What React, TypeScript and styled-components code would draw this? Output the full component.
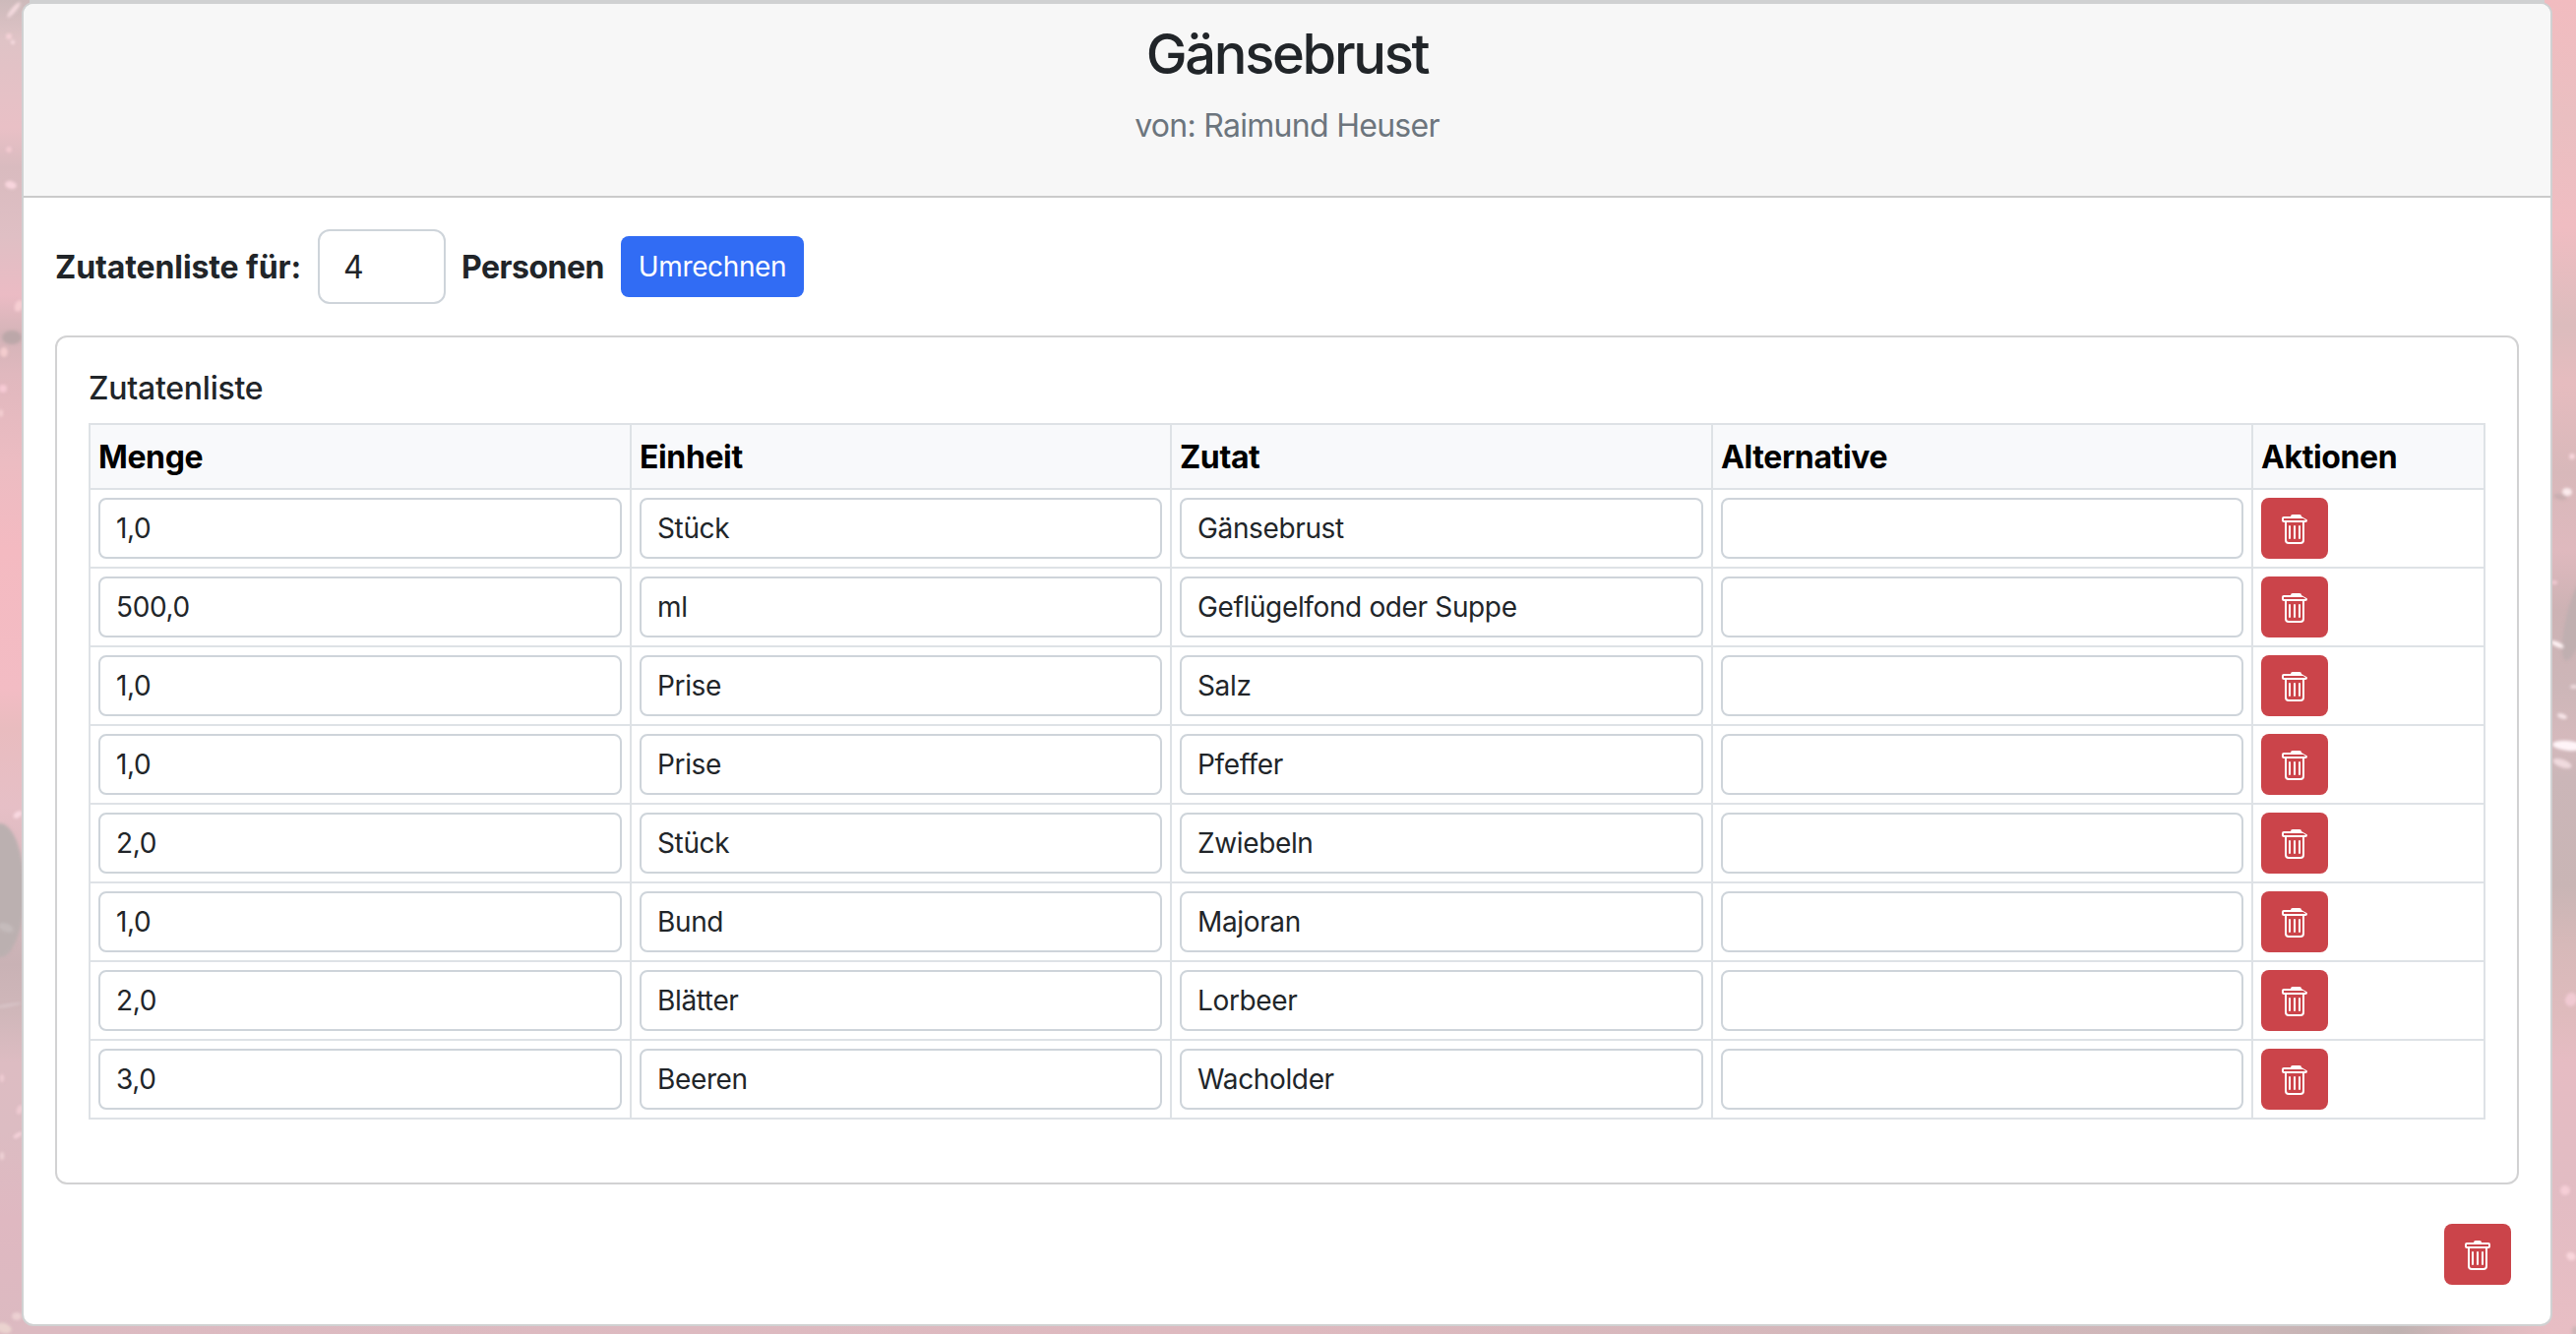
import React from "react";
import styled, { createGlobalStyle } from "styled-components";

const GlobalStyle = createGlobalStyle`
  *, *::before, *::after { box-sizing: border-box; }
  body {
    margin: 0;
    background: #e3bcc2;
    color: #212529;
    font-family: Inter, "Liberation Sans", sans-serif;
    font-size: 32px;
    line-height: 48px;
  }
`;

const Page = styled.div`
  position: relative;
  height: 1356px;
  padding: 2px 24px 8px 22px;
  overflow: hidden;
`;

const Backdrop = styled.svg`
  position: absolute;
  inset: 0;
  width: 100%;
  height: 100%;
`;

const Card = styled.main`
  position: relative;
  display: flex;
  flex-direction: column;
  height: 1346px;
  border: 2px solid #d0d1d2;
  border-radius: 12px;
  background: #fff;
`;

const CardHeader = styled.header`
  height: 197px;
  padding: 18px 32px 0;
  border-bottom: 2px solid #cacaca;
  border-radius: 10px 10px 0 0;
  background: #f7f7f7;
  text-align: center;
`;

const Title = styled.h3`
  margin: 0 0 20px;
  font-size: 56px;
  line-height: 67px;
  font-weight: 500;
  letter-spacing: -2.3px;
`;

const Author = styled.h6`
  margin: 0;
  color: #6c757d;
  font-size: 32px;
  line-height: 38px;
  font-weight: 400;
  letter-spacing: -0.72px;
`;

const CardBody = styled.div`
  padding: 32px;
`;

const Portions = styled.form`
  display: flex;
  align-items: center;
  gap: 16px;
  height: 76px;
`;

const Strong = styled.label<{ $width: number; $spacing: number }>`
  width: ${(p) => p.$width}px;
  padding-top: 1px;
  font-weight: 700;
  letter-spacing: ${(p) => p.$spacing}px;
  white-space: nowrap;
`;

const Input = styled.input<{ $large?: boolean }>`
  display: block;
  width: ${(p) => (p.$large ? "130px" : "100%")};
  height: ${(p) => (p.$large ? 76 : 62)}px;
  padding: ${(p) => (p.$large ? "12px 24px" : "8px 16px")};
  border: 2px solid #ced4da;
  border-radius: ${(p) => (p.$large ? 12 : 8)}px;
  outline: 0;
  background: #fff;
  color: #212529;
  font: inherit;
  font-size: ${(p) => (p.$large ? 32 : 28)}px;
  line-height: 42px;
  letter-spacing: -0.36px;
`;

const Button = styled.button<{ $danger?: boolean }>`
  display: flex;
  align-items: center;
  justify-content: center;
  width: ${(p) => (p.$danger ? 68 : 186)}px;
  height: 62px;
  padding: 0;
  border: 0;
  border-radius: 8px;
  background: ${(p) => (p.$danger ? "#cb444a" : "#316cf4")};
  color: #fff;
  font: inherit;
  font-size: 28px;
  line-height: 42px;
  letter-spacing: -0.38px;

  svg {
    display: block;
    width: 32px;
    height: 32px;
    margin-top: 4px;
  }
`;

const ListCard = styled.section`
  height: 863px;
  margin-top: 32px;
  padding: 32px;
  border: 2px solid #d2d2d3;
  border-radius: 12px;
`;

const ListTitle = styled.h6`
  margin: 0 0 16px;
  font-size: 32px;
  line-height: 39px;
  font-weight: 500;
  letter-spacing: -0.25px;
`;

const Table = styled.table`
  width: 2436px;
  table-layout: fixed;
  border-collapse: separate;
  border-spacing: 0;
  border-top: 2px solid #dee2e6;
  border-left: 2px solid #dee2e6;
`;

const Th = styled.th`
  height: 66px;
  padding: 2px 8px 0;
  border-right: 2px solid #dee2e6;
  border-bottom: 2px solid #dee2e6;
  background: #f8f9fb;
  color: #000;
  font-weight: 700;
  letter-spacing: -0.38px;
  text-align: left;
`;

const Td = styled.td`
  height: 80px;
  padding: 8px;
  border-right: 2px solid #dee2e6;
  border-bottom: 2px solid #dee2e6;
`;

const Footer = styled.footer`
  display: flex;
  justify-content: flex-end;
  padding: 40px 8px 0 0;
`;

const BARS =
  "M5.5 5.5A.5.5 0 0 1 6 6v6a.5.5 0 0 1-1 0V6a.5.5 0 0 1 .5-.5zm2.5 0a.5.5 0 0 1 .5.5v6a.5.5 0 0 1-1 0V6a.5.5 0 0 1 .5-.5zm3 .5a.5.5 0 0 0-1 0v6a.5.5 0 0 0 1 0V6z";
const BIN =
  "M14.5 3a1 1 0 0 1-1 1H13v9a2 2 0 0 1-2 2H5a2 2 0 0 1-2-2V4h-.5a1 1 0 0 1-1-1V2a1 1 0 0 1 1-1H6a1 1 0 0 1 1-1h2a1 1 0 0 1 1 1h3.5a1 1 0 0 1 1 1v1zM4.118 4 4 4.059V13a1 1 0 0 0 1 1h6a1 1 0 0 0 1-1V4.059L11.882 4H4.118zM2.5 3V2h11v1h-11z";
const BIN_SLANTED =
  "M14.5 3a1 1 0 0 1-1 1H13v9a2 2 0 0 1-2 2H5a2 2 0 0 1-2-2V4h-.5a1 1 0 0 1-1-1V2a1 1 0 0 1 1-1H6a1 1 0 0 1 1-1h3.5a1 1 0 0 1 1 1L13.6 2.3a1 1 0 0 1 .9.7zM4.118 4 4 4.059V13a1 1 0 0 0 1 1h6a1 1 0 0 0 1-1V4.059L11.882 4H4.118zM2.5 3V2h9.9l1.3 1h-11.2z";

const Trash = ({ slanted }: { slanted?: boolean }) => (
  <svg viewBox="0 0 16 16" fill="currentColor">
    <path d={BARS} />
    <path fillRule="evenodd" d={slanted ? BIN_SLANTED : BIN} />
  </svg>
);

type Stop = [number, string];
const LEFT: Stop[] = [
  [0, "#cdbabb"], [40, "#dfc3c6"], [130, "#e9c0c6"], [170, "#d9bbbf"], [240, "#dfbfc4"],
  [300, "#ebbbc4"], [340, "#d4b4b8"], [380, "#e0b8be"], [470, "#ecbcc2"], [560, "#f4bac1"],
  [700, "#f3bcc4"], [740, "#e9bcbf"], [820, "#e6bfc6"], [980, "#c9b2b5"], [1030, "#d0b7ba"],
  [1080, "#ddbcc2"], [1150, "#dcbcc2"], [1240, "#dfb8c1"], [1356, "#dcbac1"],
];
const RIGHT: Stop[] = [
  [0, "#f2bcc0"], [120, "#eabfc1"], [230, "#f0bdc2"], [330, "#dcbcbd"], [390, "#e6bcbf"],
  [480, "#d8b8ba"], [560, "#dfb9be"], [620, "#cdb2b4"], [700, "#cdb6b8"], [750, "#d5b9bc"],
  [790, "#cbb6b8"], [900, "#c9b5b5"], [960, "#d7b9b9"], [1030, "#dfbbbd"], [1080, "#e6bcc3"],
  [1200, "#e2bcc3"], [1356, "#e8bec4"],
];

// x, y, rx, ry, rotation, colour
const SPECKS: [number, number, number, number, number, string][] = [
  [14, 10, 10, 2.5, -50, "#f3d9dd"], [9, 37, 3, 3, 0, "#f6d2d8"], [13, 43, 2, 2, 0, "#fbe0e5"],
  [9, 152, 3, 3, 0, "#f3cad1"], [11, 188, 6, 4, 15, "#f8d5dd"], [19, 311, 4, 6, 20, "#f6cdd2"],
  [12, 343, 10, 7, 0, "#bca7a9"], [4, 358, 4, 5, 0, "#f3ccce"], [3, 395, 4, 4, 0, "#f6cad4"],
  [1, 420, 2, 4, 0, "#f4cfd2"], [18, 828, 5, 3, -35, "#f9d9e1"], [0, 905, 25, 68, 0, "#bbb0b0"],
  [6, 943, 8, 4, 20, "#c5bbbb"], [8, 1022, 14, 1.5, -10, "#d8c5c8"], [2, 1096, 2, 4, 0, "#efccd3"],
  [20, 1128, 3, 5, 20, "#efcbd2"], [18, 1154, 5, 2, -35, "#f5d2da"], [2, 1175, 2, 4, 0, "#efd3d6"],
  [4, 1350, 8, 5, 20, "#ead3cf"], [17, 1338, 5, 4, 0, "#ecd0d2"],
  [2614, 464, 3, 3, 0, "#f8d6dc"], [2602, 505, 7, 3, 10, "#c9aeb0"], [2609, 500, 5, 4, 10, "#fbeaec"],
  [2596, 592, 3, 2, 0, "#f2cbd3"], [2620, 625, 11, 48, 15, "#c0afb0"],
  [2599, 655, 7, 2.5, 25, "#fff3f4"], [2616, 698, 4, 2, 0, "#eedadd"], [2604, 728, 5, 2.5, 20, "#f8e6e9"],
  [2610, 758, 16, 5, 5, "#fff4f8"], [2604, 776, 10, 4, 20, "#f0dade"],
  [2613, 1016, 6, 7, 20, "#f0c9d2"], [2607, 1210, 5, 5, 0, "#f5ced6"],
  [2613, 1277, 5, 4, 25, "#f9d5db"], [2617, 1353, 3, 5, 0, "#ccb5b6"],
];

const Stops = ({ items }: { items: Stop[] }) => (
  <>{items.map(([y, color]) => <stop key={y} offset={y / 1356} stopColor={color} />)}</>
);

const BackdropArt = () => (
  <Backdrop viewBox="0 0 2618 1356" preserveAspectRatio="none" aria-hidden="true">
    <defs>
      <linearGradient id="left" x2="0" y2="1"><Stops items={LEFT} /></linearGradient>
      <linearGradient id="right" x2="0" y2="1"><Stops items={RIGHT} /></linearGradient>
      <linearGradient id="bottom">
        <stop offset="0" stopColor="#dcbac1" />
        <stop offset=".5" stopColor="#deb9bf" />
        <stop offset=".88" stopColor="#cdb6b8" />
        <stop offset=".94" stopColor="#bfb2b1" />
        <stop offset=".97" stopColor="#d8b8bc" />
        <stop offset="1" stopColor="#e8bec4" />
      </linearGradient>
      <filter id="soft" x="-50%" y="-50%" width="200%" height="200%"><feGaussianBlur stdDeviation="1.4" /></filter>
    </defs>
    <rect width="1309" height="1356" fill="url(#left)" />
    <rect x="1309" width="1309" height="1356" fill="url(#right)" />
    <rect x="30" y="1340" width="2560" height="16" fill="url(#bottom)" />
    <g filter="url(#soft)">
      {SPECKS.map(([x, y, rx, ry, r, fill], i) => (
        <ellipse key={i} cx={x} cy={y} rx={rx} ry={ry} fill={fill} transform={`rotate(${r} ${x} ${y})`} />
      ))}
    </g>
    <rect x="30" width="2556" height="3" fill="#d0d1d2" />
  </Backdrop>
);

const COLUMNS = ["Menge", "Einheit", "Zutat", "Alternative", "Aktionen"];
const WIDTHS = [550, 549, 550, 549, 236];
const ROWS = [
  ["1,0", "Stück", "Gänsebrust", ""],
  ["500,0", "ml", "Geflügelfond oder Suppe", ""],
  ["1,0", "Prise", "Salz", ""],
  ["1,0", "Prise", "Pfeffer", ""],
  ["2,0", "Stück", "Zwiebeln", ""],
  ["1,0", "Bund", "Majoran", ""],
  ["2,0", "Blätter", "Lorbeer", ""],
  ["3,0", "Beeren", "Wacholder", ""],
];

export default function App() {
  return (
    <>
      <GlobalStyle />
      <Page>
        <BackdropArt />
        <Card>
          <CardHeader>
            <Title>Gänsebrust</Title>
            <Author>von: Raimund Heuser</Author>
          </CardHeader>
          <CardBody>
            <Portions>
              <Strong $width={251} $spacing={-0.1}>Zutatenliste für:</Strong>
              <Input $large defaultValue="4" />
              <Strong as="span" $width={146} $spacing={-0.5}>Personen</Strong>
              <Button type="button">Umrechnen</Button>
            </Portions>
            <ListCard>
              <ListTitle>Zutatenliste</ListTitle>
              <Table>
                <colgroup>
                  {WIDTHS.map((w, i) => <col key={i} width={w} />)}
                </colgroup>
                <thead>
                  <tr>{COLUMNS.map((c) => <Th key={c}>{c}</Th>)}</tr>
                </thead>
                <tbody>
                  {ROWS.map((row, r) => (
                    <tr key={r}>
                      {row.map((value, c) => (
                        <Td key={c}><Input defaultValue={value} /></Td>
                      ))}
                      <Td><Button type="button" $danger><Trash slanted /></Button></Td>
                    </tr>
                  ))}
                </tbody>
              </Table>
            </ListCard>
            <Footer>
              <Button type="button" $danger><Trash /></Button>
            </Footer>
          </CardBody>
        </Card>
      </Page>
    </>
  );
}
